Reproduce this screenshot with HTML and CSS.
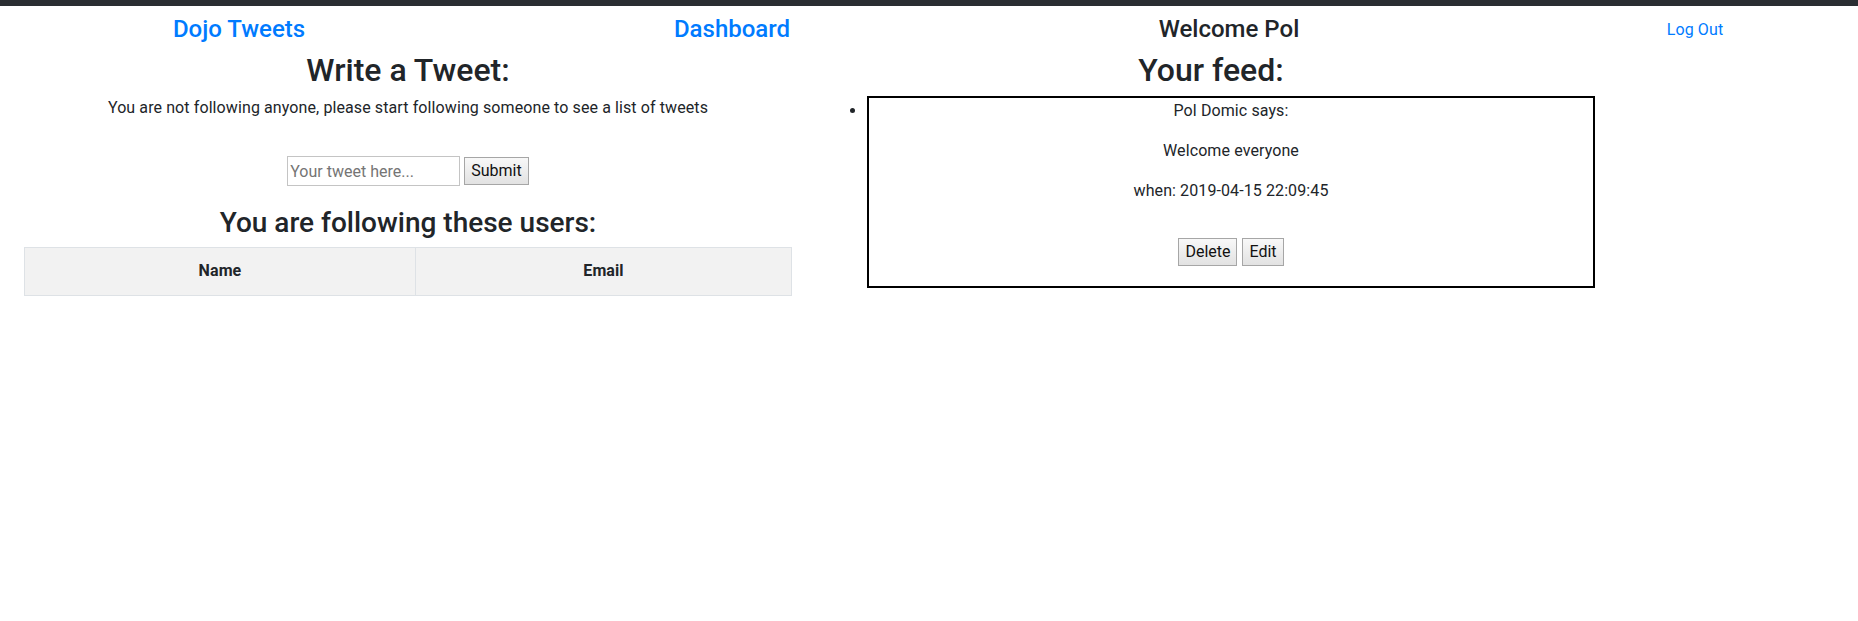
FILE: index.html
```html
<!DOCTYPE html>
<html lang="en">
<head>
<meta charset="utf-8">
<title>Dojo Tweets</title>
<link rel="stylesheet" href="styles.css">
</head>
<body>
<div class="topbar"></div>
<nav class="nav">
  <div class="nav-cell"><a class="nav-title" href="#">Dojo Tweets</a></div>
  <div class="nav-cell"><a class="nav-title" href="#">Dashboard</a></div>
  <div class="nav-cell"><span class="nav-title welcome">Welcome Pol</span></div>
  <div class="nav-cell nav-last"><a class="logout" href="#">Log Out</a></div>
</nav>
<main class="main">
  <section class="col">
    <h2 class="h2">Write a Tweet:</h2>
    <p class="note">You are not following anyone, please start following someone to see a list of tweets</p>
    <form class="tweet-form">
      <input class="tweet-input" type="text" placeholder="Your tweet here..."> <button class="btn" type="button">Submit</button>
    </form>
    <h3 class="h3">You are following these users:</h3>
    <table class="users">
      <thead>
        <tr><th class="th-name">Name</th><th>Email</th></tr>
      </thead>
    </table>
  </section>
  <section class="col">
    <h2 class="h2">Your feed:</h2>
    <ul class="feed">
      <li class="tweet">
        <p class="line">Pol Domic says:</p>
        <p class="line">Welcome everyone</p>
        <p class="line">when: 2019-04-15 22:09:45</p>
        <div class="actions"><button class="btn" type="button">Delete</button> <button class="btn" type="button">Edit</button></div>
      </li>
    </ul>
  </section>
</main>
</body>
</html>
```
FILE: styles.css
```css
* { box-sizing: border-box; }
html, body { margin: 0; padding: 0; background: #fff; }
body {
  font-family: Roboto, "Liberation Sans", sans-serif;
  font-size: 16px;
  line-height: 1.5;
  color: #212529;
  letter-spacing: 0.1px;
}
a { color: #007bff; text-decoration: none; }

.topbar { height: 6px; background: #2a2e32; }

.nav {
  display: grid;
  grid-template-columns: 478px 508px 486px 1fr;
  height: 45px;
  padding-top: 2px;
  align-items: center;
}
.nav-cell { text-align: center; }
.nav-last { padding-left: 60px; }
.nav-title { font-size: 24px; font-weight: 500; line-height: 1.2; letter-spacing: 0; }
.welcome { color: #212529; }
.logout { font-size: 16px; }

.main {
  display: flex;
  gap: 35px;
  padding-left: 24px;
}
.col { width: 768px; text-align: center; }

.h2 { font-size: 32px; font-weight: 500; line-height: 1.2; margin: 0 0 7px; letter-spacing: 0; }
.h3 { font-size: 28px; font-weight: 500; line-height: 1.2; margin: 0 0 7px; letter-spacing: 0; }
.note { margin: 0 0 16px; }

.tweet-form { padding-top: 20px; height: 70px; display: flex; justify-content: center; align-items: center; gap: 4px; padding-bottom: 20px; }
.tweet-input {
  width: 173px; height: 30px;
  border: 1px solid #c4c4c4;
  padding: 1px 2px;
  font: inherit; font-size: 16px;
  color: #212529;
  border-radius: 0;
}
.tweet-input::placeholder { color: #757575; }

.btn {
  font: inherit; font-size: 16px;
  color: #111;
  height: 28px;
  padding: 0 6px;
  border: 1px solid #a6a6a6;
  border-radius: 0;
  background: linear-gradient(#f8f8f8, #e2e2e2);
}

.users {
  width: 768px;
  border-collapse: collapse;
  border: 1px solid #dee2e6;
}
.users th {
  background: #f2f2f2;
  border: 1px solid #dee2e6;
  padding: 11.5px 12px;
  font-weight: 700;
  text-align: center;
}
.th-name { width: 391px; }

.feed { margin: 0; padding-left: 40px; text-align: center; }
.tweet {
  border: 2px solid #000;
  padding-top: 1px;
}
.line { margin: 0 0 16px; }
.actions { padding: 19px 0 20px; display: flex; justify-content: center; gap: 5px; }
```
